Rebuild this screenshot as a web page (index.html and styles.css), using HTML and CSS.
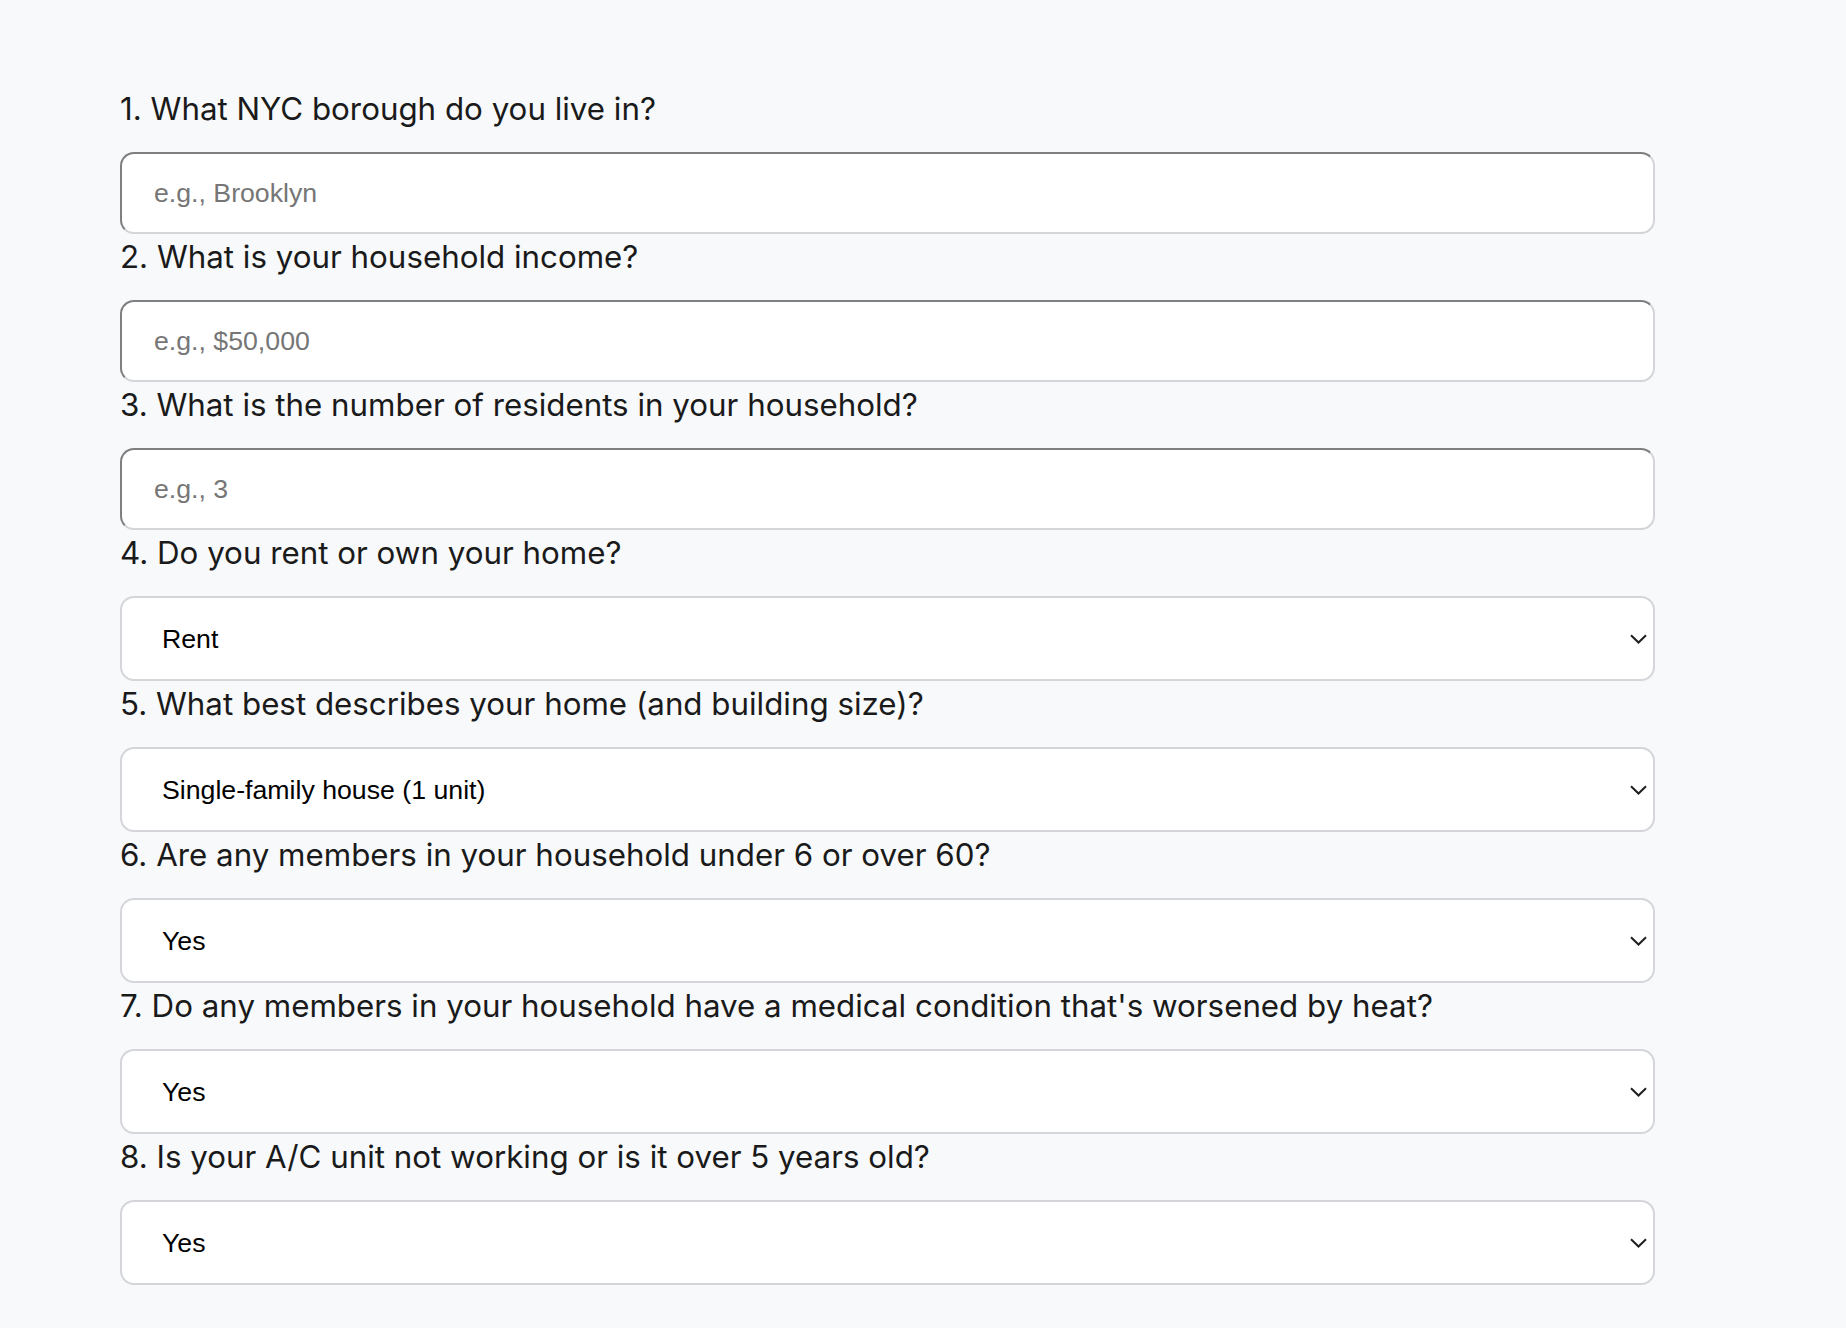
FILE: index.html
```html
<!DOCTYPE html>
<html lang="en">
<head>
<meta charset="utf-8">
<title>Heat assistance questionnaire</title>
<link rel="stylesheet" href="styles.css">
</head>
<body>
<form class="survey">
  <label class="q" for="q1">1. What NYC borough do you live in?</label>
  <input class="field" id="q1" type="text" placeholder="e.g., Brooklyn">

  <label class="q" for="q2">2. What is your household income?</label>
  <input class="field" id="q2" type="text" placeholder="e.g., $50,000">

  <label class="q" for="q3">3. What is the number of residents in your household?</label>
  <input class="field" id="q3" type="text" placeholder="e.g., 3">

  <label class="q" for="q4">4. Do you rent or own your home?</label>
  <div class="select-wrap">
    <select class="choice" id="q4"><option>Rent</option><option>Own</option></select>
    <svg class="chev" width="17" height="10" viewBox="0 0 17 10"><path d="M1 1.2 L8.5 8.5 L16 1.2" fill="none" stroke="#1f1f1f" stroke-width="2"/></svg>
  </div>

  <label class="q" for="q5">5. What best describes your home (and building size)?</label>
  <div class="select-wrap">
    <select class="choice" id="q5"><option>Single-family house (1 unit)</option></select>
    <svg class="chev" width="17" height="10" viewBox="0 0 17 10"><path d="M1 1.2 L8.5 8.5 L16 1.2" fill="none" stroke="#1f1f1f" stroke-width="2"/></svg>
  </div>

  <label class="q" for="q6">6. Are any members in your household under 6 or over 60?</label>
  <div class="select-wrap">
    <select class="choice" id="q6"><option>Yes</option><option>No</option></select>
    <svg class="chev" width="17" height="10" viewBox="0 0 17 10"><path d="M1 1.2 L8.5 8.5 L16 1.2" fill="none" stroke="#1f1f1f" stroke-width="2"/></svg>
  </div>

  <label class="q" for="q7">7. Do any members in your household have a medical condition that's worsened by heat?</label>
  <div class="select-wrap">
    <select class="choice" id="q7"><option>Yes</option><option>No</option></select>
    <svg class="chev" width="17" height="10" viewBox="0 0 17 10"><path d="M1 1.2 L8.5 8.5 L16 1.2" fill="none" stroke="#1f1f1f" stroke-width="2"/></svg>
  </div>

  <label class="q" for="q8">8. Is your A/C unit not working or is it over 5 years old?</label>
  <div class="select-wrap">
    <select class="choice" id="q8"><option>Yes</option><option>No</option></select>
    <svg class="chev" width="17" height="10" viewBox="0 0 17 10"><path d="M1 1.2 L8.5 8.5 L16 1.2" fill="none" stroke="#1f1f1f" stroke-width="2"/></svg>
  </div>
</form>
</body>
</html>
```
FILE: styles.css
```css
html, body {
  margin: 0;
  padding: 0;
  background: #f7f9fa;
}

body {
  font-family: Inter, "Liberation Sans", sans-serif;
  color: #1b1b1b;
}

.survey {
  display: flex;
  flex-direction: column;
  width: 1535px;
  padding: 86px 0 40px 120px;
}

.q {
  display: block;
  font-family: Inter, "Liberation Sans", sans-serif;
  font-size: 31.3px;
  line-height: 46px;
  height: 46px;
  letter-spacing: 0;
  margin-bottom: 20px;
  color: #1a1a1a;
  white-space: nowrap;
}

.field {
  box-sizing: border-box;
  width: 100%;
  height: 82px;
  margin: 0;
  padding: 0 32px;
  border: 2px solid;
  border-color: #7f7f7f #d3d5d9 #d3d5d9 #7f7f7f;
  border-radius: 14px;
  background: #ffffff;
  font-family: "Liberation Sans", Arial, sans-serif;
  font-size: 26.7px;
  color: #1b1b1b;
  outline: none;
}

.field::placeholder {
  color: #767676;
}

.select-wrap {
  position: relative;
  height: 85px;
}

.choice {
  appearance: none;
  -webkit-appearance: none;
  box-sizing: border-box;
  width: 100%;
  height: 85px;
  margin: 0;
  padding: 0 40px;
  border: 2px solid #d4d6da;
  border-radius: 14px;
  background: #ffffff;
  font-family: "Liberation Sans", Arial, sans-serif;
  font-size: 26.7px;
  color: #000000;
  outline: none;
}

.chev {
  position: absolute;
  right: 8px;
  top: 38px;
  pointer-events: none;
}
```
